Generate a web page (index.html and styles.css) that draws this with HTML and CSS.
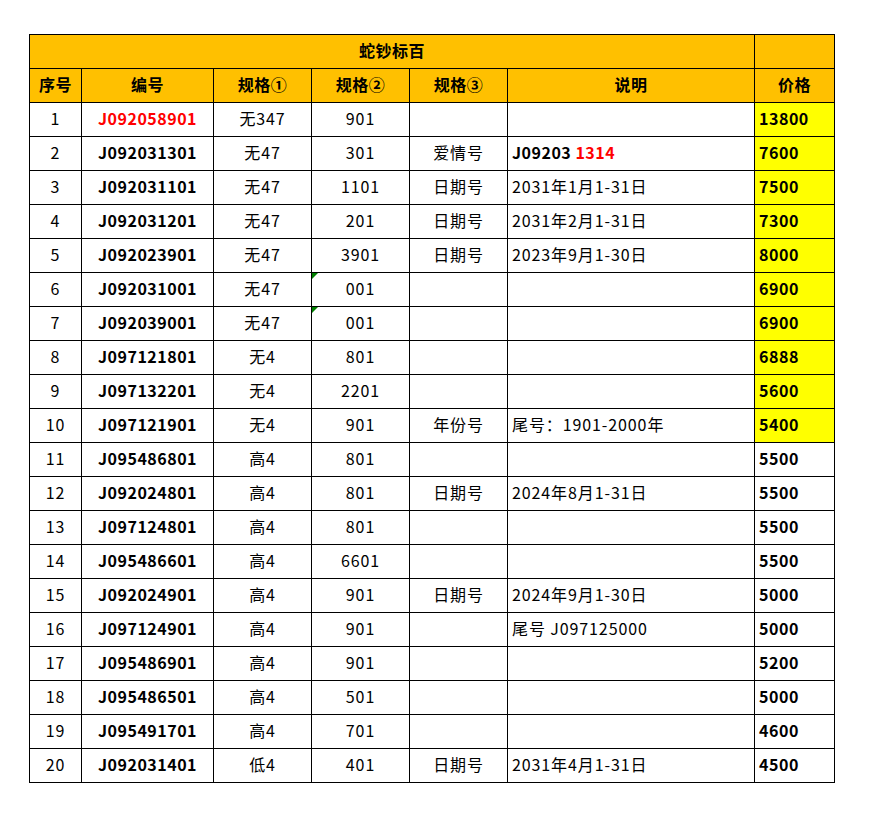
FILE: index.html
```html
<!DOCTYPE html>
<html lang="zh">
<head>
<meta charset="utf-8">
<link rel="stylesheet" href="styles.css">
</head>
<body>
<table class="sheet">
<colgroup>
<col class="c1"><col class="c2"><col class="c3"><col class="c4"><col class="c5"><col class="c6"><col class="c7">
</colgroup>
<thead>
<tr class="title"><th colspan="6">蛇钞标百</th><th></th></tr>
<tr class="head"><th>序号</th><th>编号</th><th>规格①</th><th>规格②</th><th>规格③</th><th>说明</th><th>价格</th></tr>
</thead>
<tbody>
<tr><td>1</td><td class="code red">J092058901</td><td>无347</td><td>901</td><td></td><td class="note"></td><td class="price hl">13800</td></tr>
<tr><td>2</td><td class="code">J092031301</td><td>无47</td><td>301</td><td>爱情号</td><td class="note"><b>J09203 <span class="redtxt">1314</span></b></td><td class="price hl">7600</td></tr>
<tr><td>3</td><td class="code">J092031101</td><td>无47</td><td>1101</td><td>日期号</td><td class="note">2031年1月1-31日</td><td class="price hl">7500</td></tr>
<tr><td>4</td><td class="code">J092031201</td><td>无47</td><td>201</td><td>日期号</td><td class="note">2031年2月1-31日</td><td class="price hl">7300</td></tr>
<tr><td>5</td><td class="code">J092023901</td><td>无47</td><td>3901</td><td>日期号</td><td class="note">2023年9月1-30日</td><td class="price hl">8000</td></tr>
<tr><td>6</td><td class="code">J092031001</td><td>无47</td><td class="flag">001</td><td></td><td class="note"></td><td class="price hl">6900</td></tr>
<tr><td>7</td><td class="code">J092039001</td><td>无47</td><td class="flag">001</td><td></td><td class="note"></td><td class="price hl">6900</td></tr>
<tr><td>8</td><td class="code">J097121801</td><td>无4</td><td>801</td><td></td><td class="note"></td><td class="price hl">6888</td></tr>
<tr><td>9</td><td class="code">J097132201</td><td>无4</td><td>2201</td><td></td><td class="note"></td><td class="price hl">5600</td></tr>
<tr><td>10</td><td class="code">J097121901</td><td>无4</td><td>901</td><td>年份号</td><td class="note">尾号：1901-2000年</td><td class="price hl">5400</td></tr>
<tr><td>11</td><td class="code">J095486801</td><td>高4</td><td>801</td><td></td><td class="note"></td><td class="price">5500</td></tr>
<tr><td>12</td><td class="code">J092024801</td><td>高4</td><td>801</td><td>日期号</td><td class="note">2024年8月1-31日</td><td class="price">5500</td></tr>
<tr><td>13</td><td class="code">J097124801</td><td>高4</td><td>801</td><td></td><td class="note"></td><td class="price">5500</td></tr>
<tr><td>14</td><td class="code">J095486601</td><td>高4</td><td>6601</td><td></td><td class="note"></td><td class="price">5500</td></tr>
<tr><td>15</td><td class="code">J092024901</td><td>高4</td><td>901</td><td>日期号</td><td class="note">2024年9月1-30日</td><td class="price">5000</td></tr>
<tr><td>16</td><td class="code">J097124901</td><td>高4</td><td>901</td><td></td><td class="note">尾号 J097125000</td><td class="price">5000</td></tr>
<tr><td>17</td><td class="code">J095486901</td><td>高4</td><td>901</td><td></td><td class="note"></td><td class="price">5200</td></tr>
<tr><td>18</td><td class="code">J095486501</td><td>高4</td><td>501</td><td></td><td class="note"></td><td class="price">5000</td></tr>
<tr><td>19</td><td class="code">J095491701</td><td>高4</td><td>701</td><td></td><td class="note"></td><td class="price">4600</td></tr>
<tr><td>20</td><td class="code">J092031401</td><td>低4</td><td>401</td><td>日期号</td><td class="note">2031年4月1-31日</td><td class="price">4500</td></tr>
</tbody>
</table>
</body>
</html>
```

FILE: styles.css
```css
html, body {
  margin: 0;
  padding: 0;
  background: #ffffff;
}
body {
  padding: 34px 0 0 29px;
  font-family: "Noto Sans CJK SC", "Noto Sans", sans-serif;
  font-size: 16px;
  letter-spacing: 0.5px;
  color: #000;
}
.sheet {
  border-collapse: collapse;
  table-layout: fixed;
  width: 806px;
}
.c1 { width: 52px; }
.c2 { width: 132px; }
.c3 { width: 98px; }
.c4 { width: 98px; }
.c5 { width: 98px; }
.c6 { width: 247px; }
.c7 { width: 80px; }
.sheet tr {
  height: 34px;
}
.sheet th,
.sheet td {
  border: 1px solid #000;
  padding: 0 0 4px 0;
  text-align: center;
  vertical-align: middle;
  white-space: nowrap;
  line-height: 20px;
}
.sheet td {
  letter-spacing: 0.9px;
}
.sheet th {
  background: #ffc000;
  font-weight: 700;
  letter-spacing: 0.5px;
}
.sheet td.code,
.sheet td.price,
.note b {
  letter-spacing: 0.5px;
}
.code {
  font-weight: 700;
}
.red {
  color: #ff0000;
}
.redtxt {
  color: #ff0000;
}
.sheet td.note {
  text-align: left;
  padding-left: 4px;
}
.sheet td.price {
  text-align: left;
  padding-left: 4px;
  font-weight: 700;
}
.hl {
  background: #ffff00;
}
.flag {
  position: relative;
}
.flag::before {
  content: "";
  position: absolute;
  left: 0;
  top: 0;
  width: 0;
  height: 0;
  border-top: 6px solid #008000;
  border-right: 6px solid transparent;
}
```
